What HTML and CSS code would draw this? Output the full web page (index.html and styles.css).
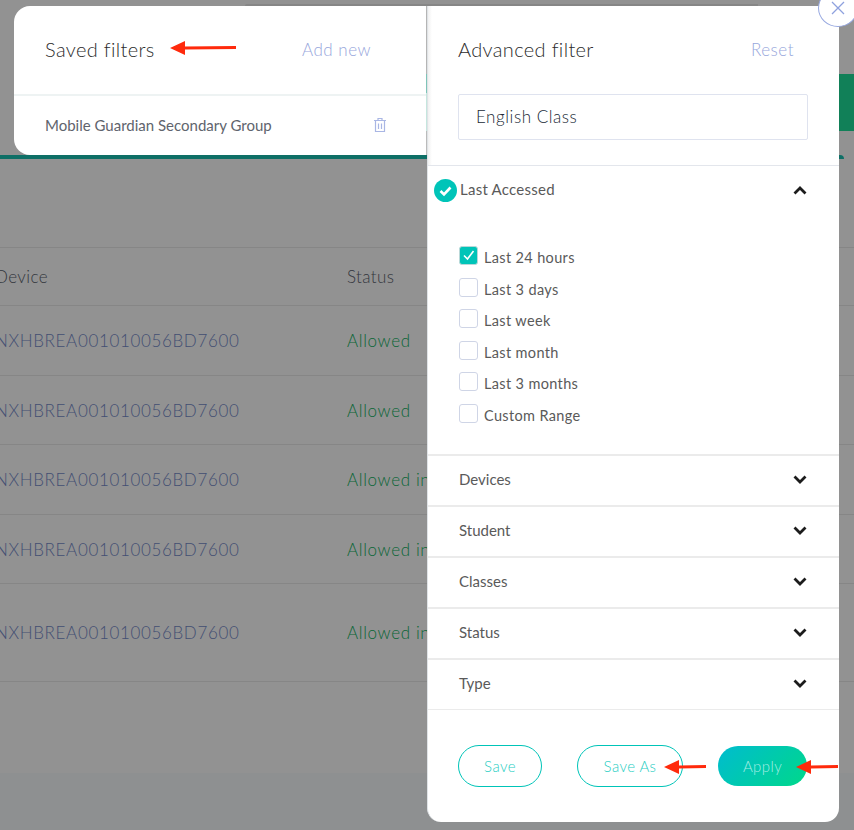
FILE: index.html
```html
<!DOCTYPE html>
<html lang="en">
<head>
<meta charset="utf-8">
<title>Advanced filter</title>
<link rel="stylesheet" href="styles.css">
</head>
<body>
<div class="page">
  <div class="backdrop">
    <div class="bg-top"><div class="bg-strip"></div><div class="bg-green"></div></div>
    <div class="bg-rule"></div>
    <div class="bg-gap"></div>
    <div class="bg-row head"><span class="c-device">Device</span><span class="c-status">Status</span></div>
    <div class="bg-row r70"><span class="c-device link">NXHBREA001010056BD7600</span><span class="c-status ok">Allowed</span></div>
    <div class="bg-row r69"><span class="c-device link">NXHBREA001010056BD7600</span><span class="c-status ok">Allowed</span></div>
    <div class="bg-row r70"><span class="c-device link">NXHBREA001010056BD7600</span><span class="c-status ok">Allowed in</span></div>
    <div class="bg-row r69"><span class="c-device link">NXHBREA001010056BD7600</span><span class="c-status ok">Allowed in</span></div>
    <div class="bg-row r98"><span class="c-device link">NXHBREA001010056BD7600</span><span class="c-status ok">Allowed in</span></div>
    <div class="bg-rest"></div>
    <div class="bg-foot"></div>
  </div>

  <section class="saved">
    <header class="saved-head">
      <h2 class="title">Saved filters</h2>
      <a class="soft-link">Add new</a>
    </header>
    <div class="saved-row">
      <span>Mobile Guardian Secondary Group</span>
      <svg class="trash" width="14" height="16" viewBox="0 0 14 16" fill="none" stroke="#a9b6e4" stroke-width="1.2"><path d="M1 3.5h12M5 3.5V1.5h4v2M2.5 3.5v11h9v-11M5.5 6.5v5.5M8.5 6.5v5.5"/></svg>
    </div>
  </section>

  <section class="filter">
    <header class="filter-head">
      <h2 class="title">Advanced filter</h2>
      <a class="soft-link">Reset</a>
    </header>
    <div class="search-wrap"><div class="search">English Class</div></div>

    <div class="acc open">
      <div class="acc-title">
        <svg class="badge" width="23" height="23" viewBox="0 0 23 23"><circle cx="11.5" cy="11.5" r="11.5" fill="#00c4b8"/><path d="M6.5 12l3.5 3.5 6.5-7" fill="none" stroke="#fff" stroke-width="2.6"/></svg>
        <span>Last Accessed</span>
        <svg class="chev" width="14" height="9" viewBox="0 0 14 9" fill="none" stroke="#1c1c1c" stroke-width="2.8"><path d="M1.5 7.5L7 2l5.500 5.500"/></svg>
      </div>
      <ul class="opts">
        <li><span class="box on"><svg width="17" height="17" viewBox="0 0 17 17" fill="none" stroke="#fff" stroke-width="1.6"><path d="M4 8.500l3.500 3.500 6-8"/></svg></span>Last 24 hours</li>
        <li><span class="box"></span>Last 3 days</li>
        <li><span class="box"></span>Last week</li>
        <li><span class="box"></span>Last month</li>
        <li><span class="box"></span>Last 3 months</li>
        <li><span class="box"></span>Custom Range</li>
      </ul>
    </div>
    <div class="acc closed"><span>Devices</span><svg class="chev" width="14" height="9" viewBox="0 0 14 9" fill="none" stroke="#1c1c1c" stroke-width="2.8"><path d="M1.500 1.500L7 7l5.500-5.500"/></svg></div>
    <div class="acc closed"><span>Student</span><svg class="chev" width="14" height="9" viewBox="0 0 14 9" fill="none" stroke="#1c1c1c" stroke-width="2.8"><path d="M1.500 1.500L7 7l5.500-5.500"/></svg></div>
    <div class="acc closed"><span>Classes</span><svg class="chev" width="14" height="9" viewBox="0 0 14 9" fill="none" stroke="#1c1c1c" stroke-width="2.8"><path d="M1.500 1.500L7 7l5.500-5.500"/></svg></div>
    <div class="acc closed"><span>Status</span><svg class="chev" width="14" height="9" viewBox="0 0 14 9" fill="none" stroke="#1c1c1c" stroke-width="2.8"><path d="M1.500 1.500L7 7l5.500-5.500"/></svg></div>
    <div class="acc closed last"><span>Type</span><svg class="chev" width="14" height="9" viewBox="0 0 14 9" fill="none" stroke="#1c1c1c" stroke-width="2.8"><path d="M1.500 1.500L7 7l5.500-5.500"/></svg></div>

    <footer class="actions">
      <button class="btn outline save">Save</button>
      <button class="btn outline save-as">Save As</button>
      <button class="btn solid">Apply</button>
    </footer>
  </section>

  <button class="close" aria-label="Close"><svg width="14" height="14" viewBox="0 0 14 14" fill="none" stroke="#8ea1de" stroke-width="1.3"><path d="M1 1l12 12M13 1L1 13"/></svg></button>

  <svg class="arrow a1" width="66" height="16" viewBox="0 0 66 16"><path d="M0 8L15 1v5.500L66 6v3L15 9.500V15z" fill="#ff2a0c"/></svg>
  <svg class="arrow a2" width="42" height="16" viewBox="0 0 42 16"><path d="M0 8L15 1v5.500L42 6v3L15 9.500V15z" fill="#ff2a0c"/></svg>
  <svg class="arrow a3" width="42" height="16" viewBox="0 0 42 16"><path d="M0 8L15 1v5.500L42 6v3L15 9.500V15z" fill="#ff2a0c"/></svg>
</div>
</body>
</html>
```
FILE: styles.css
```css
* { box-sizing: border-box; }
html, body { margin: 0; padding: 0; }
body { font-family: "Lato", "Open Sans", sans-serif; color: #4a4f57; }
.page { position: relative; width: 854px; height: 830px; overflow: hidden; background: #929292; }

.backdrop { display: flex; flex-direction: column; height: 830px; }
.bg-top { height: 155px; flex: none; display: flex; justify-content: space-between; align-items: flex-start; padding-top: 4px; }
.bg-strip { width: 513px; height: 2px; margin-left: 245px; background: #868686; border-radius: 2px 0 0 0; }
.bg-green { width: 15px; height: 57px; margin-top: 70px; background: #118058; }
.bg-rule { height: 4px; width: 844px; flex: none; background: #0e6f66; border-radius: 0 4px 0 0; }
.bg-gap { height: 88px; flex: none; }
.bg-row { display: flex; align-items: center; flex: none; border-top: 1px solid #868686; font-size: 17px; font-weight: 300; color: #33363d; }
.bg-row.head { height: 58px; letter-spacing: .4px; }
.r70 { height: 70px; }
.r69 { height: 69px; }
.r98 { height: 98px; }
.c-device { width: 352px; margin-left: -5px; flex: none; white-space: nowrap; }
.c-status { white-space: nowrap; }
.link { color: #434f72; letter-spacing: .65px; }
.ok { color: #0a6636; letter-spacing: .65px; }
.bg-rest { height: 92px; flex: none; border-top: 1px solid #868686; }
.bg-foot { flex: 1; background: #8e9091; }

.title { margin: 0; font-size: 20px; font-weight: 300; letter-spacing: .35px; color: #2c2c2c; }
.soft-link { font-size: 17px; font-weight: 300; letter-spacing: .5px; color: #98a7dc; }

.saved { position: absolute; left: 14px; top: 6px; width: 413px; height: 149px; background: #fff; border-radius: 16px 0 0 16px; }
.saved::after { content: ""; position: absolute; right: 0; top: 0; width: 1px; height: 149px; background: linear-gradient(#b5b5b5 0 68px, #7fc4b8 68px 87px, #c5e6de 87px 125px, #bbb 125px); }
.saved-head { display: flex; justify-content: space-between; align-items: center; height: 90px; padding: 0 56px 1px 31px; border-bottom: 2px solid #eef3f3; }
.saved-head .title { margin-bottom: 2px; }
.saved-row { display: flex; justify-content: space-between; align-items: center; height: 59px; padding: 0 40px 2px 31px; font-size: 15px; color: #60646d; }

.filter { position: absolute; left: 427px; top: 6px; width: 412px; height: 816px; background: #fff; border-left: 1px solid #dfe3e6; border-radius: 0 0 14px 14px; }
.filter-head { display: flex; justify-content: space-between; align-items: center; height: 88px; padding: 0 45px 2px 30px; background: linear-gradient(90deg, #f1f1f1, #fff 4px); }
.search-wrap { padding: 0 31px 0 30px; height: 72px; border-bottom: 1px solid #e3e6ec; background: linear-gradient(90deg, #f1f1f1, #fff 4px); }
.search { height: 46px; border: 1px solid #dfe3ef; border-radius: 2px; display: flex; align-items: center; padding: 0 0 2px 17px; font-size: 17px; letter-spacing: .55px; font-weight: 300; color: #202a36; }

.acc { font-size: 15px; color: #5a5a5a; border-bottom: 2px solid #ebebeb; }
.acc-title { position: relative; display: flex; align-items: center; justify-content: space-between; height: 49px; padding: 0 32px; letter-spacing: .25px; }
.acc-title span { margin: 0 auto 4px 0; }
.badge { position: absolute; left: 6px; top: 13px; }
.acc.open { height: 290px; }
.opts { list-style: none; margin: 0; padding: 26.700px 0 0 31px; }
.opts li { display: flex; align-items: center; gap: 6px; height: 31.600px; font-size: 14.500px; letter-spacing: .35px; }
.box { width: 19px; height: 19px; flex: none; border: 1px solid #cfd5e6; border-radius: 3px; margin-top: -4px; display: block; }
.box.on { background: #00c4b8; border-color: #b9d8d8; }
.box svg { display: block; margin: 0; }

.acc.closed { display: flex; align-items: center; justify-content: space-between; height: 51px; padding: 0 32px 2px 31px; }
.acc.closed span { margin-bottom: 2px; }
.acc.last { border-bottom-width: 1px; height: 50px; }

.actions { display: flex; align-items: center; height: 112px; padding: 0 0 0 30px; }
.btn { height: 42px; border-radius: 21px; font: 300 15px "Lato", sans-serif; letter-spacing: .4px; padding: 0; }
.outline { background: #fff; border: 1px solid #00c4b8; color: #1fcec3; }
.save { width: 84px; margin-right: 35px; }
.save-as { width: 106px; margin-right: 35px; }
.solid { width: 89px; height: 40px; border: 0; color: #a4ede4; background: linear-gradient(135deg, #00bccf, #00d88a); }

.close { position: absolute; left: 818px; top: -11px; width: 40px; height: 38px; padding: 0; border-radius: 50%; background: #fff; border: 1px solid #97a8e0; display: flex; align-items: center; justify-content: center; }
.arrow { position: absolute; }
.a1 { left: 170px; top: 40px; }
.a2 { left: 664px; top: 759px; }
.a3 { left: 796px; top: 759px; }
```
